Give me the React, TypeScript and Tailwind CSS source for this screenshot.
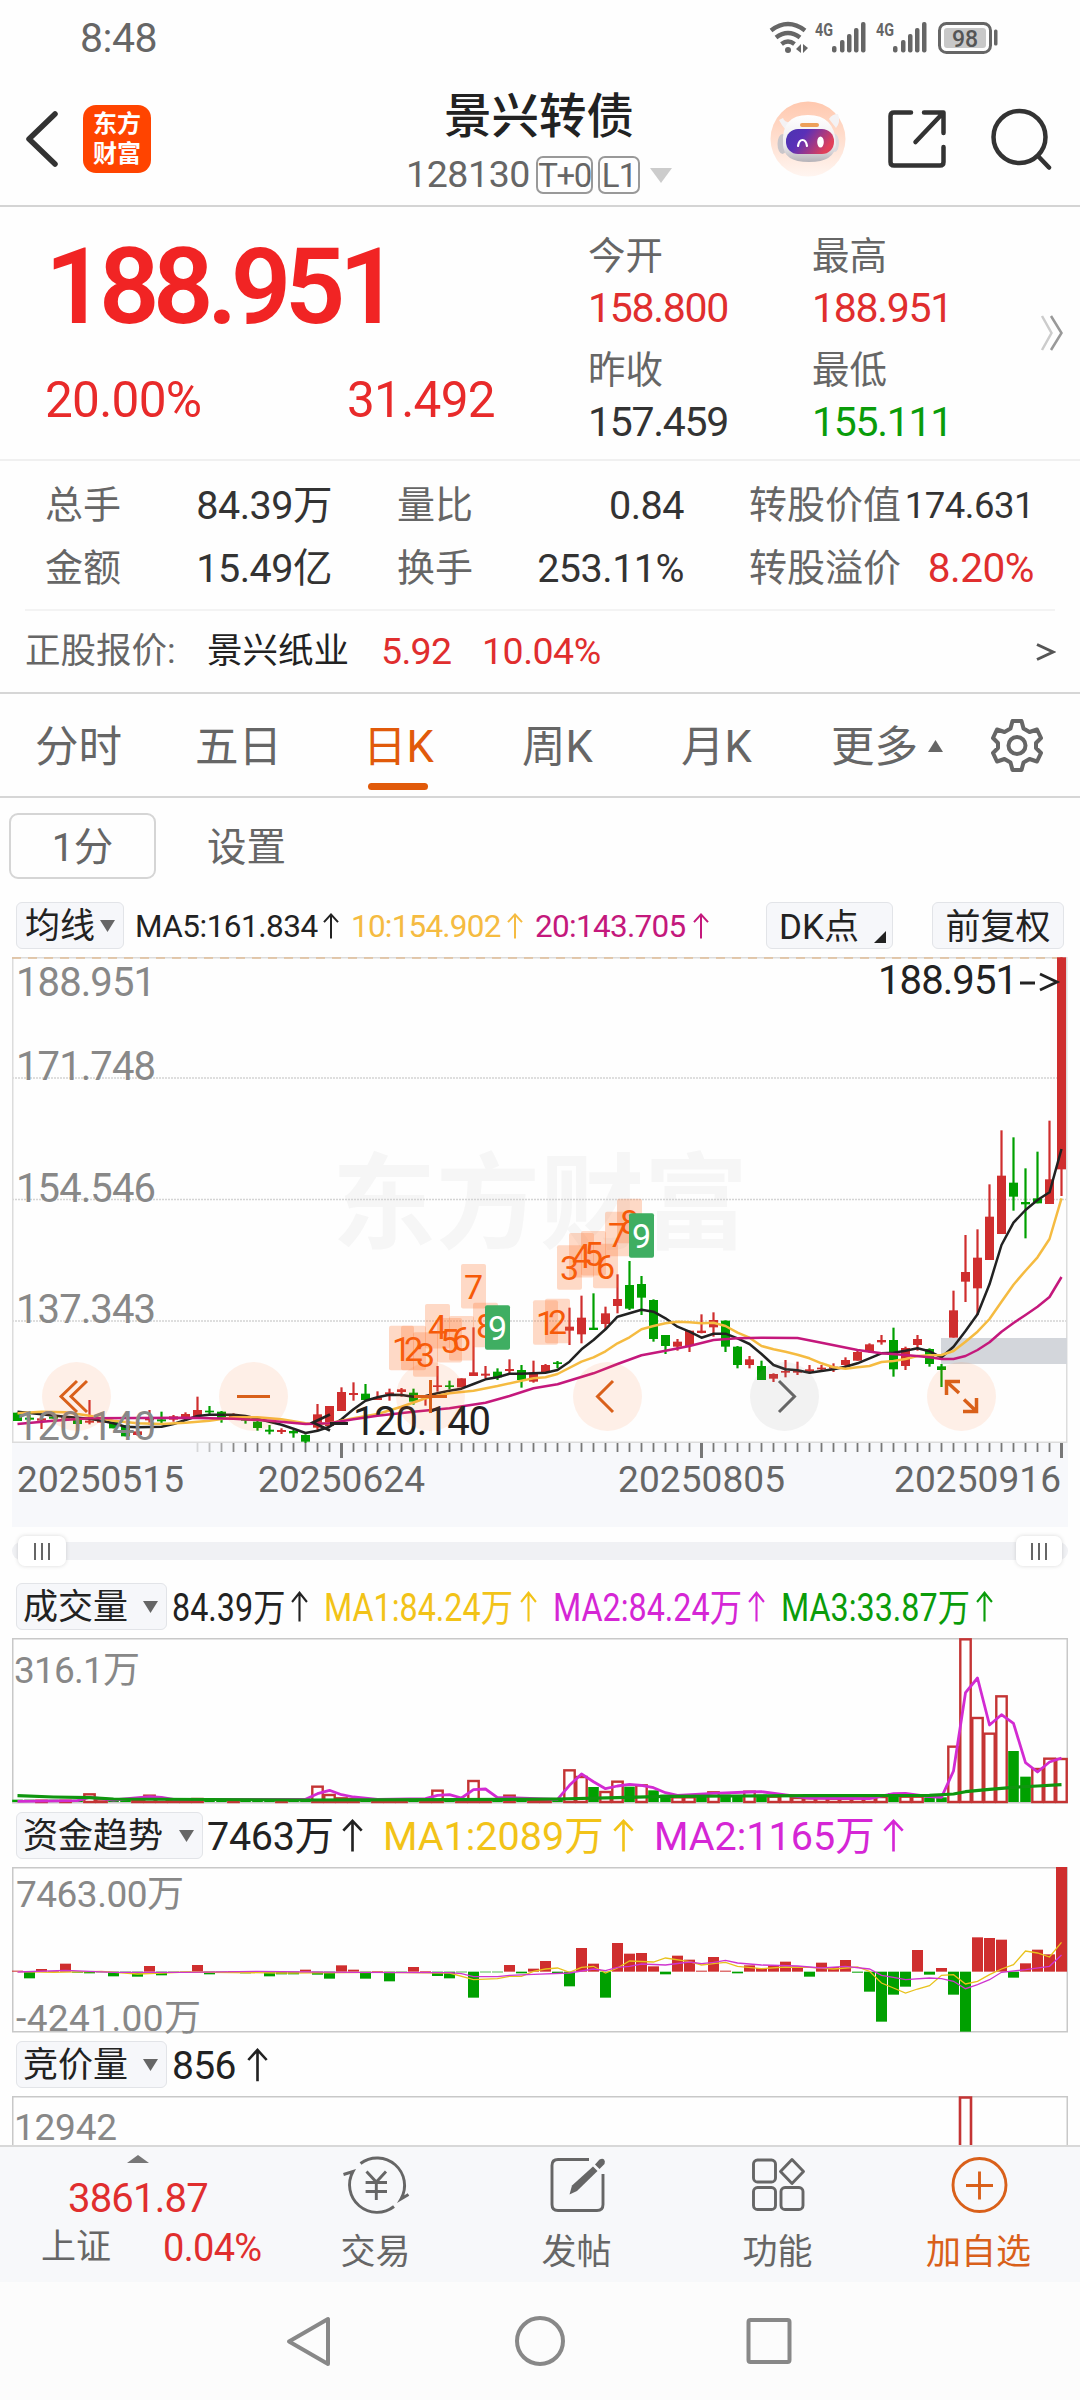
import React from 'react';

const RED = '#cf2e2e';
const GREEN = '#00a000';

type Candle = [up: number, high: number, top: number, bottom: number, low: number];

// one entry per trading day, in thirds of a pixel below PRICE_BASE
const candles: Candle[] = [
    [0, 788, 788, 813, 813], [0, 795, 803, 809, 812], [1, 795, 805, 812, 837], [0, 800, 800, 806, 806],
    [1, 800, 800, 806, 806], [0, 805, 805, 822, 822], [1, 750, 812, 818, 823], [1, 812, 812, 818, 818],
    [0, 815, 815, 835, 835], [0, 825, 825, 859, 859], [1, 840, 844, 855, 857], [1, 780, 805, 811, 825],
    [0, 785, 808, 814, 825], [1, 795, 799, 809, 815], [1, 787, 792, 803, 803], [1, 740, 780, 798, 800],
    [0, 768, 782, 787, 795], [0, 783, 785, 805, 818], [1, 790, 793, 803, 803], [0, 800, 803, 812, 821],
    [0, 813, 815, 834, 842], [0, 825, 839, 845, 853], [1, 835, 840, 846, 852], [0, 840, 843, 850, 863],
    [0, 853, 855, 875, 879], [1, 762, 793, 833, 840], [1, 768, 768, 828, 828], [1, 712, 726, 783, 783],
    [1, 697, 729, 735, 752], [0, 702, 731, 750, 750], [1, 724, 742, 750, 750], [1, 716, 727, 733, 752],
    [1, 714, 718, 726, 740], [0, 716, 728, 755, 764], [1, 735, 740, 745, 767], [1, 648, 706, 711, 725],
    [0, 692, 706, 711, 718], [1, 685, 685, 712, 712], [1, 532, 667, 678, 678], [1, 648, 671, 677, 685],
    [0, 655, 665, 682, 690], [1, 628, 657, 663, 675], [0, 645, 660, 690, 713], [1, 632, 668, 695, 698],
    [1, 642, 645, 668, 668], [0, 633, 637, 642, 655], [1, 473, 530, 542, 585], [1, 437, 503, 553, 580],
    [0, 430, 533, 540, 540], [1, 470, 490, 522, 538], [1, 373, 447, 468, 490], [0, 333, 405, 476, 480],
    [0, 378, 402, 443, 495], [0, 448, 450, 567, 575], [0, 555, 555, 588, 612], [1, 567, 575, 590, 602],
    [1, 542, 542, 588, 606], [1, 493, 542, 549, 550], [1, 487, 510, 532, 560], [0, 511, 512, 590, 606],
    [0, 588, 590, 645, 655], [1, 618, 628, 645, 655], [0, 632, 648, 690, 690], [1, 670, 672, 686, 696],
    [1, 630, 663, 668, 682], [1, 635, 662, 668, 675], [1, 645, 658, 664, 670], [1, 645, 653, 658, 664],
    [1, 640, 650, 656, 666], [1, 622, 630, 645, 650], [1, 603, 606, 632, 632], [1, 580, 583, 606, 608],
    [1, 555, 570, 577, 584], [0, 533, 570, 658, 680], [1, 590, 594, 648, 660], [1, 555, 567, 585, 602],
    [0, 595, 597, 642, 650], [0, 642, 649, 660, 711], [1, 422, 481, 563, 563], [1, 255, 366, 395, 456],
    [1, 238, 323, 415, 495], [1, 103, 200, 330, 330], [1, -59, 77, 252, 252], [0, -38, 98, 140, 182],
    [0, 55, 156, 163, 265], [0, 5, 145, 160, 160], [1, -88, 88, 162, 162], [1, -578, -578, 58, 138],
];

const ma5 = '0:785 2:793 4:800 6:806 7:812 8:820 9:830 10:832 12:830 13:822 14:810 15:798 16:794 18:794 19:798 20:806 21:815 22:824 23:836 24:849 25:842 26:830 27:808 28:778 29:752 30:742 31:734 32:735 33:740 34:738 35:730 36:722 37:716 38:702 39:688 40:682 41:671 42:671 43:670 44:668 45:660 46:635 47:598 48:570 49:538 50:500 51:490 52:479 53:485 54:505 55:530 56:545 57:563 58:551 59:551 60:565 61:582 62:612 63:645 64:658 65:661 66:668 67:663 68:658 69:650 70:640 71:625 72:610 73:608 74:602 75:595 76:604 77:622 78:590 79:543 80:493 81:403 82:285 83:218 84:180 85:150 86:127 87:-3';
const ma10 = '0:790 2:785 4:787 6:797 8:812 10:820 12:822 14:818 16:812 18:802 20:802 22:808 24:820 25:822 26:820 27:812 28:805 30:792 32:770 34:745 36:730 38:722 40:708 42:692 43:685 44:682 45:672 47:635 48:622 49:604 50:580 51:562 52:538 53:528 54:520 55:515 56:517 57:520 58:518 59:528 60:548 61:563 62:588 63:598 64:605 65:614 66:625 67:640 68:652 69:656 70:652 71:648 72:636 73:633 74:627 75:618 76:616 77:615 78:603 79:575 80:545 81:507 82:455 83:404 84:362 85:322 86:267 87:145';
const ma20 = '0:822 3:812 6:805 10:804 14:803 18:806 21:812 24:822 26:820 28:808 30:797 33:785 36:775 39:758 41:738 43:715 45:703 48:670 50:642 52:616 54:602 56:588 58:570 60:565 62:563 65:564 67:578 70:600 72:610 74:615 76:622 77:627 78:627 79:618 80:600 81:577 82:545 83:519 84:495 85:470 86:441 87:381';

const marks = [
    { start: 32, tops: [527, 527, 547, 462, 504, 498, 342, 458, 466] },
    { start: 44, tops: [451, 446, 286, 249, 243, 281, 185, 146, 190] },
];

const volumes: Record<number, [number, number]> = {
    6: [1, 672], 7: [1, 687], 11: [1, 676], 12: [1, 684], 15: [1, 686], 25: [1, 649], 26: [1, 674], 27: [1, 684], 28: [1, 686],
    35: [1, 661], 36: [0, 688], 38: [1, 632], 39: [1, 687], 41: [1, 676], 42: [0, 687], 46: [1, 600], 47: [1, 620],
    48: [0, 653], 49: [1, 665], 50: [1, 634], 51: [0, 652], 52: [1, 645], 53: [0, 663], 54: [0, 676], 55: [1, 681],
    56: [1, 681], 57: [0, 682], 58: [1, 666], 59: [0, 676], 60: [0, 680], 61: [1, 664], 62: [0, 676], 63: [1, 679],
    64: [1, 676], 65: [1, 683], 66: [1, 684], 67: [1, 684], 68: [1, 685], 69: [1, 685], 70: [1, 684], 71: [1, 683],
    72: [1, 680], 73: [0, 672], 74: [1, 679], 75: [1, 679], 76: [0, 684], 77: [0, 684], 78: [1, 529], 79: [1, 207],
    80: [1, 443], 81: [1, 490], 82: [1, 378], 83: [0, 545], 84: [0, 622], 85: [1, 596], 86: [1, 565], 87: [1, 566],
};
const volMa2 = '0:696 5:694 6:684 7:688 8:692 11:682 12:684 13:690 24:690 25:673 26:663 27:676 28:683 30:690 34:688 35:678 36:676 37:686 38:661 39:659 40:685 41:685 45:690 46:648 47:614 48:637 49:658 50:650 51:645 52:648 53:655 54:670 55:678 58:672 61:668 62:667 64:677 66:686 71:688 73:673 74:672 76:682 77:684 78:605 79:370 80:326 81:467 82:436 83:462 84:580 85:608 86:578 87:566';
const volMa3 = '0:679 3:683 6:685 8:689 24:692 36:691 45:689 50:685 54:681 60:680 66:679 76:678 78:674 79:667 81:660 83:654 85:650 87:646';

const flowZero = 516;
const flows = [
    513, 536, 508, 514, 492, 519, 521, 518, 530, 519, 531, 499, 527, 518, 517, 496, 524, 518, 514, 521, 514, 530, 524, 524,
    510, 525, 537, 497, 510, 537, 514, 545, 520, 502, 514, 529, 536, 518, 594, 518, 518, 496, 521, 507, 484, 521, 560, 445,
    492, 594, 430, 462, 460, 500, 524, 468, 480, 513, 472, 513, 521, 497, 505, 498, 486, 500, 531, 489, 502, 481, 519, 576,
    666, 585, 561, 451, 525, 505, 585, 696, 413, 415, 420, 534, 491, 450, 464, 202,
];
const flowMa1 = '0:516 3:518 7:515 10:523 14:517 22:520 30:518 36:520 38:540 40:537 41:530 42:530 43:515 44:508 45:505 46:518 47:503 48:500 49:520 50:505 51:484 53:487 54:475 56:486 57:496 58:492 59:488 60:500 62:507 64:502 66:503 68:508 70:502 71:515 72:550 73:565 74:580 75:568 76:558 77:527 78:525 79:553 80:545 81:525 82:508 83:495 84:454 85:460 86:472 87:428';
const flowMa2 = '0:517 4:512 8:518 14:518 20:515 28:518 36:519 37:522 38:531 40:531 41:527 43:524 46:520 47:514 48:508 49:513 50:503 51:500 52:493 54:496 56:487 57:492 58:488 59:482 60:490 62:496 65:499 67:505 69:500 71:508 72:527 73:533 74:540 76:535 77:537 78:545 79:567 80:555 81:540 82:518 84:510 86:500 87:466';

const PRICE_BASE = 193;
const px = (i: number) => 5.5 + i * 12;
const py = (v: number) => PRICE_BASE + v / 3;

const toPoints = (data: string, y: (v: number) => number) =>
    data.split(' ').map((p) => {
        const [i, v] = p.split(':').map(Number);
        return `${px(i)},${y(v).toFixed(1)}`;
    }).join(' ');

const Up: React.FC<{ className?: string }> = ({ className = 'w-4 h-[27px]' }) => (
    <svg className={`shrink-0 ${className}`} viewBox="0 0 16 27" fill="none" stroke="currentColor" strokeWidth="2" preserveAspectRatio="none">
        <path d="M8 26.5V1.5M1 9.5 8 1.5l7 8" />
    </svg>
);

const Picker: React.FC<{ label: string; className: string }> = ({ label, className }) => (
    <div className={`h-[47px] shrink-0 rounded-md border border-[#e2e4e8] bg-[#f6f7fa] flex items-center justify-between text-[35px] text-[#222] ${className}`}>
        <span className="mt-[2px]">{label}</span>
        <svg className="w-[15px] h-3" viewBox="0 0 15 12"><path d="M0 0h15L7.500 12z" fill="#666" /></svg>
    </div>
);

const StatusBar = () => (
    <div className="h-[76px] shrink-0 flex items-center pl-[80px] pr-[83px] text-[#666]">
        <span className="text-[41px] tracking-[-0.5px]">8:48</span>
        <svg className="ml-auto w-[228px] h-[46px] overflow-visible" viewBox="769 14 228 46" fill="none" stroke="#666">
            <g strokeWidth="4.500">
                <path d="M771 29.500q17-13 34 0" />
                <path d="M776 36.500q12-9 24 0" />
                <path d="M781.500 43q6.500-5 13 0" />
            </g>
            <circle cx="788" cy="49" r="3" fill="#666" stroke="none" />
            <path d="M801 43v9l-5-4zM803 43v9l5-5z" fill="#666" stroke="none" />
            {[832, 893].map((x) => (
                <g key={x} fill="#666" stroke="none">
                    <text x={x - 17} y="35" fontSize="18.500" fontWeight="700" textLength="18" lengthAdjust="spacingAndGlyphs">4G</text>
                    <rect x={x} y="45" width="4.500" height="6.500" rx="2" />
                    <rect x={x + 8} y="39" width="4.500" height="12.500" rx="2" />
                    <rect x={x + 15} y="33" width="4.500" height="18.500" rx="2" />
                    <rect x={x + 22} y="27" width="4.500" height="24.500" rx="2" />
                    <rect x={x + 29} y="21" width="4.500" height="30.500" rx="2" />
                </g>
            ))}
            <rect x="939.500" y="22.500" width="51" height="29" rx="7" strokeWidth="3" />
            <rect x="944" y="27" width="42" height="20" rx="3" fill="#c8c8c8" stroke="none" />
            <rect x="994" y="28.500" width="3.500" height="16" rx="1.500" fill="#666" stroke="none" />
            <text x="965" y="45.500" fontSize="23" fontWeight="500" textAnchor="middle" fill="#555" stroke="none">98</text>
        </svg>
    </div>
);

const Robot = () => (
    <svg className="w-[76px] h-[76px]" viewBox="0 0 76 76">
        <defs>
            <linearGradient id="halo" x1="0" y1="0" x2="0" y2="1">
                <stop offset="0" stopColor="#ffc8ae" />
                <stop offset="1" stopColor="#fff5f0" />
            </linearGradient>
            <linearGradient id="visor" x1="0" y1="0" x2="1" y2="0.4">
                <stop offset="0" stopColor="#4a35b0" />
                <stop offset="0.400" stopColor="#5a30b8" />
                <stop offset="1" stopColor="#e0405a" />
            </linearGradient>
            <linearGradient id="shell" x1="0" y1="0" x2="0" y2="1">
                <stop offset="0" stopColor="#ffffff" />
                <stop offset="0.650" stopColor="#eceaec" />
                <stop offset="1" stopColor="#b5b2b8" />
            </linearGradient>
        </defs>
        <circle cx="38" cy="38" r="37.500" fill="url(#halo)" />
        <ellipse cx="12.500" cy="43" rx="5" ry="10" fill="#c9c6ca" />
        <ellipse cx="65" cy="42" rx="4" ry="9" fill="#dedbde" />
        <path d="M9 19q3 6 6 9l6-6q-7-1-8-5zM68 13q-6 0-9 5l7 9q5-6 2-14z" fill="#f4f2f4" />
        <path d="M13 43Q11 14 38 14T66 43Q65 61 39 61T13 43z" fill="url(#shell)" />
        <rect x="30" y="22" width="19" height="4" rx="2" fill="#eda05a" />
        <rect x="16" y="28" width="48" height="25" rx="12" fill="url(#visor)" />
        <path d="M28 45q1-6 4.500-6t4.500 6" stroke="#fff" strokeWidth="2.200" fill="none" strokeLinecap="round" />
        <ellipse cx="50.500" cy="41" rx="3.300" ry="5.500" fill="#fff" />
    </svg>
);

const Header = () => (
    <div className="h-[131px] shrink-0 grid grid-cols-[300px_1fr_310px] border-b-2 border-[#d4d4d4]">
        <div className="flex items-center pl-[24px] pb-[3px]">
            <svg className="w-[36px] h-[58px]" viewBox="0 0 36 58" fill="none" stroke="#333" strokeWidth="5.500" strokeLinecap="round" strokeLinejoin="round">
                <path d="M31 4 5 29l26 25" />
            </svg>
            <div className="ml-[23px] w-[68px] h-[68px] rounded-[13px] bg-[#ff4400] text-white font-bold text-[24px] leading-[30px] pt-[4px] text-center">
                <div>东方</div>
                <div>财富</div>
            </div>
        </div>
        <div className="flex flex-col items-center pt-[11px] pl-[8px]">
            <div className="text-[47.500px] leading-[60px] font-medium text-[#222]">景兴转债</div>
            <div className="h-[56px] flex items-center text-[#666]">
                <span className="text-[37.500px] tracking-[-0.400px]">128130</span>
                <span className="ml-[6px] w-[57px] h-[38px] rounded-[7px] border-2 border-[#999] text-[33px] leading-[35px] tracking-[-1.5px] text-center">T+0</span>
                <span className="ml-[5px] w-[42px] h-[38px] rounded-[7px] border-2 border-[#999] text-[33px] leading-[35px] tracking-[-1px] text-center">L1</span>
                <svg className="ml-[10px] w-[22px] h-[15px]" viewBox="0 0 22 15"><path d="M0 0h22L11 15z" fill="#ccc" /></svg>
            </div>
        </div>
        <div className="flex items-center pb-[4px]">
            <Robot />
            <svg className="ml-[41px] w-[60px] h-[60px]" viewBox="0 0 60 60" fill="none" stroke="#333" strokeWidth="4.500">
                <path d="M24 3.500H7q-3.500 0-3.500 3.500V53q0 3.500 3.500 3.500H53q3.500 0 3.500-3.500V38M56.500 24V3.500H37M56 4 28.500 33" strokeLinecap="round" strokeLinejoin="round" />
            </svg>
            <svg className="ml-[44px] w-[62px] h-[62px]" viewBox="0 0 62 62" fill="none" stroke="#333" strokeWidth="4.500" strokeLinecap="round">
                <circle cx="28.500" cy="29" r="26" />
                <path d="m47 48 11 11.500" />
            </svg>
        </div>
    </div>
);

const QuoteCell: React.FC<{ label: string; value: string; color: string }> = ({ label, value, color }) => (
    <div className="h-[104px] w-[224px] leading-[52px]">
        <div className="text-[37.500px] text-[#666]">{label}</div>
        <div className={`text-[41px] tracking-[-1.300px] ${color}`}>{value}</div>
    </div>
);

const Quote = () => (
    <div className="h-[254px] shrink-0 flex border-b-2 border-[#f0f0f0]">
        <div className="w-[588px] pt-[25px] text-[#f12424]">
            <div className="pl-[45px] text-[106px] leading-[110px] font-semibold tracking-[-6.500px]">188.951</div>
            <div className="mt-[28px] pl-[45px] flex text-[49.500px] leading-[60px] tracking-[-0.700px] text-[#e82a2a]">
                <span className="w-[302px]">20.00%</span>
                <span>31.492</span>
            </div>
        </div>
        <div className="w-[448px] pt-[23px] flex flex-wrap content-start gap-y-[10px]">
            <QuoteCell label="今开" value="158.800" color="text-[#e02e2e]" />
            <QuoteCell label="最高" value="188.951" color="text-[#e02e2e]" />
            <QuoteCell label="昨收" value="157.459" color="text-[#333]" />
            <QuoteCell label="最低" value="155.111" color="text-[#0a9c0a]" />
        </div>
        <svg className="mt-[107px] ml-[4px] w-[24px] h-[38px]" viewBox="0 0 24 38" fill="none" strokeWidth="2.500">
            <path d="M2 2 11.500 19 2 36" stroke="#ccc" />
            <path d="M11 2l10.500 17L11 36" stroke="#999" />
        </svg>
    </div>
);

const Stat: React.FC<{ label: string; value: string; valueClass?: string }> = ({ label, value, valueClass = 'text-[#333] text-[39.500px]' }) => (
    <div className="flex justify-between">
        <span className="text-[38px] text-[#666]">{label}</span>
        <span className={`tracking-[-0.500px] ${valueClass}`}>{value}</span>
    </div>
);

const Stats = () => (
    <div className="h-[150px] shrink-0 mx-[25px] border-b-2 border-[#f3f3f3] pt-[13px] pl-[20px] grid grid-cols-[287px_287px_285px] gap-x-[65px] auto-rows-[63px] leading-[63px]">
        <Stat label="总手" value="84.39万" />
        <Stat label="量比" value="0.84" />
        <Stat label="转股价值" value="174.631" valueClass="text-[#333] text-[36.500px]" />
        <Stat label="金额" value="15.49亿" />
        <Stat label="换手" value="253.11%" />
        <Stat label="转股溢价" value="8.20%" valueClass="text-[#e02e2e] text-[40.500px]" />
    </div>
);

const StockRow = () => (
    <div className="h-[83px] shrink-0 flex items-center pl-[25px] pr-[24px] border-b-2 border-[#d6d6d6] text-[35.500px]">
        <span className="w-[182px] text-[#666]">正股报价:</span>
        <span className="w-[174px] text-[#222]">景兴纸业</span>
        <span className="w-[101px] text-[37.500px] tracking-[-0.700px] text-[#e02e2e]">5.92</span>
        <span className="text-[37.500px] tracking-[-0.500px] text-[#e02e2e]">10.04%</span>
        <svg className="ml-auto w-[20px] h-[20px]" viewBox="0 0 20 20" fill="none" stroke="#555" strokeWidth="3"><path d="M1 2.500 17 10 1 17.500" /></svg>
    </div>
);

const Gear = () => (
    <svg className="w-[52px] h-[54px]" viewBox="0 0 52 54" fill="none" stroke="#666" strokeWidth="4" strokeLinejoin="round">
        <path d="M21.500 3h9l2 7.500 6 3.500 7.500-2.500 4 8.500-5 5v5l5 5-4 8.500-7.500-2.500-6 3.500-2 7.500h-9l-2-7.500-6-3.500L6 43.500 2 35l5-5v-5l-5-5 4-8.500L13.500 14l6-3.500z" />
        <circle cx="26" cy="27.500" r="8.500" />
    </svg>
);

const Tabs = () => (
    <div className="h-[104px] shrink-0 flex items-center pl-[35px] pt-[5px] border-b-2 border-[#d6d6d6] text-[43.500px] text-[#666]">
        <span className="w-[160px]">分时</span>
        <span className="w-[168px]">五日</span>
        <div className="w-[159px] relative text-[#e15a0a]">
            日K
            <div className="absolute left-[5px] top-[57px] w-[60px] h-[7px] rounded-full bg-[#e15a0a]" />
        </div>
        <span className="w-[159px]">周K</span>
        <span className="w-[150px]">月K</span>
        <span>更多</span>
        <svg className="ml-[10px] mb-[4px] w-[15px] h-[12px]" viewBox="0 0 15 12"><path d="M0 12h15L7.500 0z" fill="#666" /></svg>
        <div className="ml-[48px] mb-[5px]"><Gear /></div>
    </div>
);

const SubTabs = () => (
    <div className="shrink-0 mt-[15px] h-[66px] flex items-center pl-[9px] text-[39.500px] text-[#666]">
        <div className="w-[147px] h-[66px] pt-[3px] rounded-[9px] border-2 border-[#d5d5d5] flex items-center justify-center">1分</div>
        <span className="ml-[51px] mt-[4px]">设置</span>
    </div>
);

const MaRow = () => (
    <div className="shrink-0 mt-[23px] h-[47px] flex items-center pl-[16px] text-[31.500px]">
        <Picker label="均线" className="w-[108px] pl-[8px] pr-[8px]" />
        <span className="ml-[11px] mt-[2px] w-[188px] tracking-[-0.500px] text-[#222]">MA5:161.834</span>
        <Up className="w-[16px] h-[26px] text-[#222]" />
        <span className="ml-[12px] mt-[2px] w-[156px] tracking-[-0.800px] text-[#f5bb41]">10:154.902</span>
        <Up className="w-[16px] h-[26px] text-[#f5bb41]" />
        <span className="ml-[12px] mt-[2px] w-[158px] tracking-[-0.700px] text-[#c4187c]">20:143.705</span>
        <Up className="w-[16px] h-[26px] text-[#c4187c]" />
        <div className="ml-auto w-[127px] h-[47px] rounded-md border border-[#e2e4e8] bg-[#f6f7fa] flex items-center pl-[12px] text-[35px] text-[#222]">
            <span className="mt-[3px]">DK点</span>
            <svg className="ml-auto mr-[6px] mt-[22px] w-[12px] h-[12px]" viewBox="0 0 12 12"><path d="M12 0v12H0z" fill="#222" /></svg>
        </div>
        <div className="ml-[39px] mr-[16px] w-[132px] h-[47px] pt-[3px] rounded-md border border-[#e2e4e8] bg-[#f6f7fa] flex items-center justify-center text-[35px] text-[#222]">前复权</div>
    </div>
);

const RoundButton: React.FC<{ gray?: boolean; children: React.ReactNode }> = ({ gray, children }) => (
    <div className={`w-[69px] h-[69px] rounded-full ${gray ? 'bg-[#888]/10 text-[#666]' : 'bg-[#ff6a1f]/10 text-[#d9601a]'}`}>
        <svg className="w-full h-full" viewBox="0 0 69 69" fill="none" stroke="currentColor" strokeWidth="3">{children}</svg>
    </div>
);

const PriceChart = () => (
    <div className="shrink-0 relative mt-[8px] ml-[12px] w-[1056px] h-[570px]">
        <svg className="w-[1056px] h-[570px]" viewBox="0 0 1056 570">
            <rect x="0" y="486" width="1056" height="84" fill="#f7f8fb" />
            <text x="320" y="284" fontSize="104" fontWeight="700" fill="#f6f6f6">东方财富</text>
            {[121, 242.5, 364].map((y) => (
                <line key={y} x1="0" x2="1055" y1={y} y2={y} stroke="#d4d4d4" strokeWidth="1.500" strokeDasharray="2 1" />
            ))}
            <rect x="0.750" y="0.750" width="1054" height="484.500" fill="none" stroke="#dcdcdc" strokeWidth="1.500" />
            <line x1="0" x2="1055" y1="1" y2="1" stroke="#e0bd98" strokeWidth="1.500" strokeDasharray="9 7" />
            <rect x="929" y="381" width="126" height="26" fill="#d3d6db" />

            {candles.map(([up, high, top, bottom, low], i) => (
                <g key={i} fill={up ? RED : GREEN}>
                    <rect x={px(i) - 1.1} y={py(high)} width="2.200" height={(low - high) / 3} />
                    <rect x={px(i) - 4.5} y={py(top)} width="9" height={(bottom - top) / 3} />
                </g>
            ))}

            <g fill="none" strokeWidth="2.500" strokeLinejoin="round">
                <polyline points={toPoints(ma5, py)} stroke="#222" />
                <polyline points={toPoints(ma10, py)} stroke="#f5bb41" />
                <polyline points={toPoints(ma20, py)} stroke="#c4187c" />
            </g>

            {marks.map(({ start, tops }) => tops.map((t, n) => (
                <g key={start + n}>
                    <rect x={px(start + n) - 12.500} y={py(t)} width="25" height="44.500" rx="2" fill={n === 8 ? '#3fae62' : '#ff6a1f'} fillOpacity={n === 8 ? 1 : 0.25} />
                    <text x={px(start + n)} y={py(t) + 35} fontSize="34" textAnchor="middle" fill={n === 8 ? '#fff' : '#f65a08'}>{n + 1}</text>
                </g>
            )))}

            <g fontSize="40" fill="#888">
                <text x="4" y="39" textLength="140">188.951</text>
                <text x="4" y="123" textLength="140">171.748</text>
                <text x="4" y="245" textLength="140">154.546</text>
                <text x="4" y="366" textLength="140">137.343</text>
                <text x="4" y="483" textLength="140">120.140</text>
            </g>
            <g fontSize="40" fill="#222">
                <text x="866" y="37" textLength="140">188.951</text>
                <text x="341" y="478" textLength="138">120.140</text>
            </g>
            <g fill="none" stroke="#222" strokeWidth="2.800">
                <path d="M1008 26h15M1028 17l17 8-17 8" />
                <path d="M336 466.500H318M318 457.500 301 465.500l17 8" />
            </g>

            {candles.map((_, i) => i >= 15 && (
                <line
                    key={i}
                    x1={px(i)} x2={px(i)} y1="486" y2={i % 30 === 27 ? 501 : 495}
                    stroke="#777" strokeWidth={i % 30 === 27 ? 3 : 1.8}
                    opacity={i < 19 ? 0.25 + (i - 15) * 0.2 : 1}
                />
            ))}
            <g fontSize="37" fill="#666">
                <text x="5" y="535" textLength="167">20250515</text>
                <text x="246" y="535" textLength="167">20250624</text>
                <text x="606" y="535" textLength="167">20250805</text>
                <text x="882" y="535" textLength="167">20250916</text>
            </g>
        </svg>

        <div className="absolute left-[30px] top-[405px] flex gap-[108px]">
            <RoundButton><path d="M35 19 19 34.500 35 50M45 19 29 34.500 45 50" /></RoundButton>
            <RoundButton><path d="M18 34.500h33" /></RoundButton>
            <RoundButton><path d="M18 34.500h33M34.500 18v33" /></RoundButton>
            <RoundButton><path d="M40 19 24.500 34.500 40 50" /></RoundButton>
            <RoundButton gray><path d="M29 19 44.500 34.500 29 50" /></RoundButton>
            <RoundButton><path d="M19.500 33V19.500H33M20 20l12 11M37 37.500 49 49M49.500 36v13.500H36" strokeWidth="3.500" /></RoundButton>
        </div>
    </div>
);

const Handle: React.FC<{ className: string }> = ({ className }) => (
    <div className={`h-[30px] rounded-[7px] bg-white shadow-[0_0_4px_rgba(0,0,0,0.15)] flex items-center justify-center gap-[5px] ${className}`}>
        <div className="w-[2px] h-[17px] bg-[#666]" />
        <div className="w-[2px] h-[17px] bg-[#666]" />
        <div className="w-[2px] h-[17px] bg-[#666]" />
    </div>
);

const RangeSlider = () => (
    <div className="shrink-0 mt-[15px] mx-[12px] h-[18px] rounded-full bg-[#f0f1f4] flex items-center justify-between pl-[6px] pr-[6px]">
        <Handle className="w-[48px]" />
        <Handle className="w-[46px]" />
    </div>
);

const VolumeChart = () => {
    const vy = (v: number) => (v - 206) / 3;
    return (
        <svg className="shrink-0 mt-[8px] ml-[12px] w-[1056px] h-[166px]" viewBox="0 0 1056 166">
            <rect x="0.750" y="0.750" width="1054.500" height="164" fill="none" stroke="#c8c8c8" strokeWidth="1.500" />
            <text x="2" y="44.500" fontSize="37" fill="#888" textLength="126">316.1万</text>
            {candles.map(([up], i) => {
                const [rise, v] = volumes[i] ?? [up, 691];
                return rise
                    ? <rect key={i} x={px(i) - 5.2} y={vy(v) + 1} width="10.400" height={163 - vy(v)} fill="#fff" stroke="#c43434" strokeWidth="2.400" />
                    : <rect key={i} x={px(i) - 5.3} y={vy(v)} width="10.600" height={164 - vy(v)} fill={GREEN} />;
            })}
            <g fill="none" strokeLinejoin="round">
                <polyline points={toPoints(volMa2, vy)} stroke="#d22bd2" strokeWidth="2.800" />
                <polyline points={toPoints(volMa3, vy)} stroke="#0f960f" strokeWidth="3.200" />
            </g>
        </svg>
    );
};

const FlowChart = () => {
    const fy = (v: number) => (v - 202) / 3;
    return (
        <svg className="shrink-0 mt-[8px] ml-[12px] w-[1056px] h-[166px] overflow-visible" viewBox="0 0 1056 166">
            <rect x="0.750" y="0.750" width="1054.500" height="164" fill="none" stroke="#c8c8c8" strokeWidth="1.500" />
            <g fontSize="37" fill="#888">
                <text x="4" y="40" textLength="168">7463.00万</text>
                <text x="4" y="163.500" textLength="185">-4241.00万</text>
            </g>
            {flows.map((v, i) => (
                <rect key={i} x={px(i) - 5.5} width="11" y={fy(Math.min(v, flowZero))} height={Math.abs(v - flowZero) / 3} fill={v < flowZero ? RED : GREEN} />
            ))}
            <g fill="none" strokeWidth="1.300">
                <polyline points={toPoints(flowMa1, fy)} stroke="#e8c21c" />
                <polyline points={toPoints(flowMa2, fy)} stroke="#cf35cf" />
            </g>
        </svg>
    );
};

const NavItem: React.FC<{ label: string; className?: string; children: React.ReactNode }> = ({ label, className = 'text-[#666]', children }) => (
    <div className={`w-[201px] flex flex-col items-center pt-[9px] ${className}`}>
        <svg className="w-[68px] h-[60px]" viewBox="0 0 68 60" fill="none" stroke="currentColor" strokeWidth="2.900">{children}</svg>
        <div className="mt-[12px] text-[35px] leading-[50px]">{label}</div>
    </div>
);

const BottomBar = () => (
    <div className="h-[137px] shrink-0 border-t-2 border-[#d8d8d8] bg-[#f7f8fa] flex">
        <div className="w-[275px] flex flex-col pt-[8px]">
            <svg className="ml-[127px] w-[22px] h-[8px]" viewBox="0 0 22 8"><path d="M0 8 11 0l11 8z" fill="#777" /></svg>
            <div className="pl-[68px] mt-[12px] text-[40px] leading-[48px] tracking-[-0.800px] text-[#e02e2e]">3861.87</div>
            <div className="pl-[41px] flex text-[35px] leading-[50px] text-[#666]">
                <span className="w-[122px]">上证</span>
                <span className="text-[38px] tracking-[-0.700px] text-[#e02e2e]">0.04%</span>
            </div>
        </div>
        <NavItem label="交易">
            <path d="M18.500 7.500A27.500 27.500 0 0 1 59 43l7.500-4.500" />
            <path d="M1.500 18.500 11 15.500A27.500 27.500 0 0 0 52 50.500" />
            <path d="M24.500 15.500 34.300 26l9.700-10.500M23.600 26.500h21.400M23.600 35.500h21.400M34.300 26v18" />
        </NavItem>
        <NavItem label="发帖">
            <path d="M46 3.500H15q-6 0-6 6V48.500q0 6 6 6H54q6 0 6-6V18" />
            <path d="M26.500 38.500l2.500-9L50 10.500l4.500 4.500L34 35z" fill="currentColor" stroke="none" />
            <path d="M52 8.500l4.500-5q3-1.500 4.500 0t.500 4.500L56.500 13z" fill="currentColor" stroke="none" />
        </NavItem>
        <NavItem label="功能">
            <rect x="9.500" y="4" width="22" height="22" rx="4" />
            <rect x="9.500" y="31.500" width="22" height="22" rx="4" />
            <rect x="37" y="31.500" width="22" height="22" rx="4" />
            <path d="M48 3.500 59.500 15.500 48 27.500 36.500 15.500z" strokeLinejoin="round" />
        </NavItem>
        <NavItem label="加自选" className="text-[#d9601a]">
            <circle cx="34.500" cy="29" r="26.500" />
            <path d="M21 29.500h27M34.500 15.500v28" />
        </NavItem>
    </div>
);

const SystemNav = () => (
    <div className="flex-1 bg-[#fcfcfc] flex justify-center pt-[33px] pr-[2px]">
        <svg className="w-[506px] h-[52px]" viewBox="286 2315 506 52" fill="none" stroke="#888" strokeWidth="4" strokeLinejoin="round">
            <path d="M328 2319v45l-39-22.500z" />
            <circle cx="540" cy="2341" r="23" />
            <rect x="748.500" y="2320" width="41" height="42" rx="2" />
        </svg>
    </div>
);

const App: React.FC = () => (
    <div className="w-[1080px] h-[2400px] overflow-hidden bg-[#fefefe] flex flex-col whitespace-nowrap leading-none font-['Roboto','Noto_Sans_CJK_SC',sans-serif]">
        <StatusBar />
        <Header />
        <Quote />
        <Stats />
        <StockRow />
        <Tabs />
        <SubTabs />
        <MaRow />
        <PriceChart />
        <RangeSlider />

        <div className="shrink-0 mt-[23px] h-[47px] flex items-center pl-[16px] text-[38px]">
            <Picker label="成交量" className="w-[151px] pl-[6px] pr-[8px]" />
            <span className="ml-[5px] mt-[3px] w-[119px] origin-left scale-x-[0.85] text-[#222]">84.39万</span>
            <Up className="w-[17px] h-[31px] text-[#222]" />
            <span className="ml-[16px] mt-[3px] w-[196px] origin-left scale-x-[0.85] text-[#f2c318]">MA1:84.24万</span>
            <Up className="w-[17px] h-[31px] text-[#f2c318]" />
            <span className="ml-[16px] mt-[3px] w-[195px] origin-left scale-x-[0.85] text-[#d526d5]">MA2:84.24万</span>
            <Up className="w-[17px] h-[31px] text-[#d526d5]" />
            <span className="ml-[16px] mt-[3px] w-[195px] origin-left scale-x-[0.85] text-[#0a9c0a]">MA3:33.87万</span>
            <Up className="w-[17px] h-[31px] text-[#0a9c0a]" />
        </div>
        <VolumeChart />

        <div className="shrink-0 mt-[8px] h-[47px] flex items-center pl-[16px] text-[39.500px]">
            <Picker label="资金趋势" className="w-[187px] pl-[6px] pr-[8px]" />
            <span className="ml-[4px] mt-[3px] w-[135px] tracking-[-0.300px] text-[#222]">7463万</span>
            <Up className="w-[21px] h-[33px] text-[#222]" />
            <span className="ml-[20px] mt-[3px] w-[230px] text-[#f2c318]">MA1:2089万</span>
            <Up className="w-[21px] h-[33px] text-[#f2c318]" />
            <span className="ml-[20px] mt-[3px] w-[229px] text-[#d526d5]">MA2:1165万</span>
            <Up className="w-[21px] h-[33px] text-[#d526d5]" />
        </div>
        <FlowChart />

        <div className="shrink-0 mt-[8px] h-[47px] flex items-center pl-[16px] text-[39px] text-[#222]">
            <Picker label="竞价量" className="w-[151px] pl-[6px] pr-[8px]" />
            <span className="ml-[5px] mt-[3px] w-[75px] tracking-[-0.700px]">856</span>
            <Up className="w-[21px] h-[34px]" />
        </div>
        <svg className="shrink-0 mt-[8px] ml-[12px] w-[1056px] h-[49px]" viewBox="0 0 1056 49">
            <path d="M0.750 49V0.750H1055.250V49" fill="none" stroke="#c8c8c8" strokeWidth="1.500" />
            <text x="2" y="44" fontSize="37" fill="#888" textLength="103">12942</text>
            <path d="M948 49V1.500h11V49" fill="none" stroke="#c43434" strokeWidth="2.600" />
        </svg>
        <BottomBar />
        <SystemNav />
    </div>
);

export default App;
